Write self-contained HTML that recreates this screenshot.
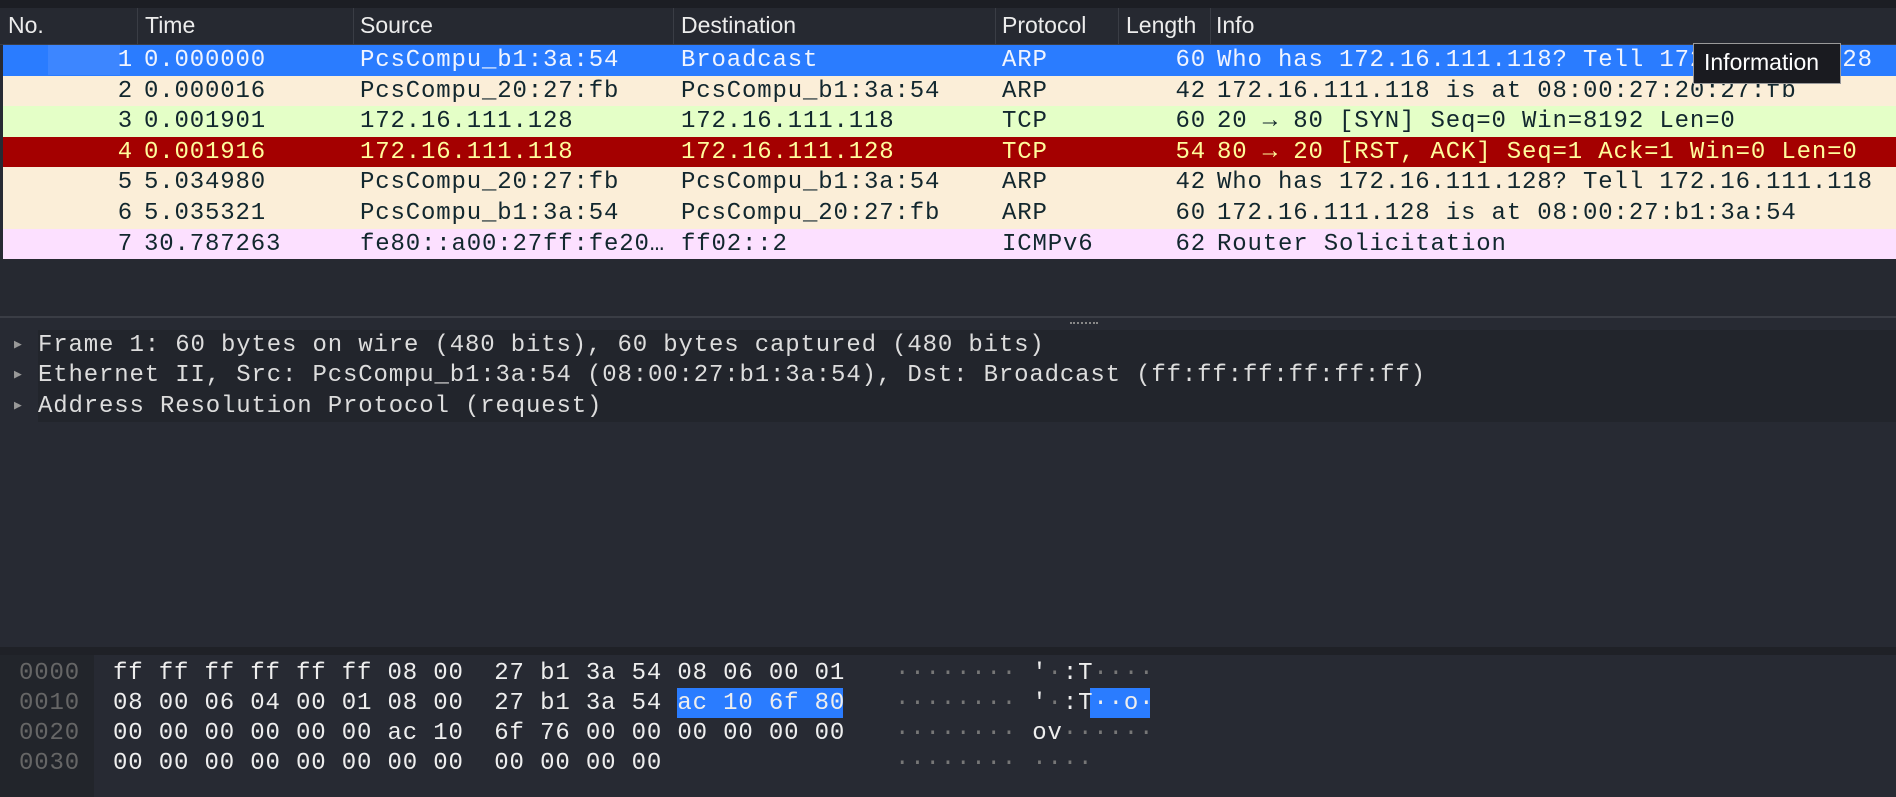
<!DOCTYPE html>
<html><head><meta charset="utf-8"><style>
*{margin:0;padding:0;box-sizing:border-box}
body{width:1896px;height:797px;background:#272a33;position:relative;overflow:hidden;font-family:"Liberation Mono",monospace;font-size:24px;letter-spacing:0.85px}
.abs{position:absolute;white-space:pre}
#top{left:0;top:0;width:1896px;height:8px;background:#1c1e24}
#hdr{left:0;top:8px;width:1896px;height:37px;background:#262931;border-bottom:1px solid #3a3d45;font-family:"Liberation Sans",sans-serif;font-size:23px;letter-spacing:0;color:#ececec}
#hdr span{position:absolute;top:4px}
#hdr i{position:absolute;top:0;width:1px;height:37px;background:#3a3d45}
.row{position:absolute;left:3px;width:1893px;height:30.6px;color:#12272e}
.row span{position:absolute;top:2px;white-space:pre}
.tip{left:1693px;top:43px;width:148px;height:41px;background:#1a1b20;border:1px solid #9a9a9a;color:#fff;font-family:"Liberation Sans",sans-serif;font-size:23px;letter-spacing:0;padding:5px 0 0 10px}
.tri{font-size:13px;color:#999;position:relative;top:-3px}
</style></head><body>
<div class="abs" id="top"></div>
<div class="abs" id="hdr">
<span style="left:8px">No.</span><i style="left:137px"></i>
<span style="left:145px">Time</span><i style="left:353px"></i>
<span style="left:360px">Source</span><i style="left:673px"></i>
<span style="left:681px">Destination</span><i style="left:995px"></i>
<span style="left:1002px">Protocol</span><i style="left:1118px"></i>
<span style="left:1126px">Length</span><i style="left:1210px"></i>
<span style="left:1216px">Info</span>
</div>
<div id="rows"></div>
<div class="abs" style="left:0;top:259px;width:1896px;height:58px;background:#262931"></div>
<div class="abs" style="left:0;top:316px;width:1896px;height:2px;background:#3a3d45"></div>
<div class="abs" style="left:1070px;top:322px;width:28px;height:3px;border-top:2px dotted #888"></div>
<div class="abs" style="left:38px;top:330px;width:1858px;height:92px;background:#22252c"></div>
<div class="abs" style="left:14px;top:332px;color:#ddd"><span class="tri">▶</span> Frame 1: 60 bytes on wire (480 bits), 60 bytes captured (480 bits)</div>
<div class="abs" style="left:14px;top:362px;color:#ddd"><span class="tri">▶</span> Ethernet II, Src: PcsCompu_b1:3a:54 (08:00:27:b1:3a:54), Dst: Broadcast (ff:ff:ff:ff:ff:ff)</div>
<div class="abs" style="left:14px;top:393px;color:#ddd"><span class="tri">▶</span> Address Resolution Protocol (request)</div>
<div class="abs" style="left:0;top:647px;width:1896px;height:8px;background:#1f2127"></div>
<div class="abs" style="left:0;top:655px;width:94px;height:142px;background:#22252b"></div>
<div class="abs" style="left:19px;top:659px;color:#666;line-height:30px">0000
0010
0020
0030</div>
<div class="abs" style="left:677px;top:688px;width:166px;height:30px;background:#2a7cff"></div>
<div class="abs" style="left:1090px;top:688px;width:60px;height:30px;background:#2a7cff"></div>
<div class="abs" style="left:113px;top:659px;color:#eee;line-height:30px">ff ff ff ff ff ff 08 00  27 b1 3a 54 08 06 00 01
08 00 06 04 00 01 08 00  27 b1 3a 54 ac 10 6f 80
00 00 00 00 00 00 ac 10  6f 76 00 00 00 00 00 00
00 00 00 00 00 00 00 00  00 00 00 00</div>
<div class="abs" style="left:895px;top:659px;color:#eee;line-height:30px"><span style="color:#777">········</span> '<span style="color:#777">·</span>:T<span style="color:#777">····</span>
<span style="color:#777">········</span> '<span style="color:#777">·</span>:T··o·
<span style="color:#777">········</span> ov<span style="color:#777">······</span>
<span style="color:#777">········ ····</span></div>
<div class="abs tip">Information</div>
<script>
var R=[
["#2a7cff","#f0f4ff","1","0.000000","PcsCompu_b1:3a:54","Broadcast","ARP","60","Who has 172.16.111.118? Tell 172.16.111.128"],
["#fbeed8","#12272e","2","0.000016","PcsCompu_20:27:fb","PcsCompu_b1:3a:54","ARP","42","172.16.111.118 is at 08:00:27:20:27:fb"],
["#e4ffc7","#12272e","3","0.001901","172.16.111.128","172.16.111.118","TCP","60","20 → 80 [SYN] Seq=0 Win=8192 Len=0"],
["#a40000","#fffc9c","4","0.001916","172.16.111.118","172.16.111.128","TCP","54","80 → 20 [RST, ACK] Seq=1 Ack=1 Win=0 Len=0"],
["#fbeed8","#12272e","5","5.034980","PcsCompu_20:27:fb","PcsCompu_b1:3a:54","ARP","42","Who has 172.16.111.128? Tell 172.16.111.118"],
["#fbeed8","#12272e","6","5.035321","PcsCompu_b1:3a:54","PcsCompu_20:27:fb","ARP","60","172.16.111.128 is at 08:00:27:b1:3a:54"],
["#fce0ff","#12272e","7","30.787263","fe80::a00:27ff:fe20…","ff02::2","ICMPv6","62","Router Solicitation"]];
var h="";
R.forEach(function(r,i){
h+='<div class="row" style="top:'+(45+i*30.6)+'px;background:'+r[0]+';color:'+r[1]+'">'+
(i==0?'<div style="position:absolute;left:45px;top:0;width:72px;height:30px;background:#3d86ff"></div>':'')+
'<span style="right:1763px">'+r[2]+'</span><span style="left:141px">'+r[3]+'</span><span style="left:357px">'+r[4]+'</span><span style="left:678px">'+r[5]+'</span><span style="left:999px">'+r[6]+'</span><span style="right:690px">'+r[7]+'</span><span style="left:1214px">'+r[8]+'</span></div>';});
document.getElementById("rows").innerHTML=h;
</script>
</body></html>
